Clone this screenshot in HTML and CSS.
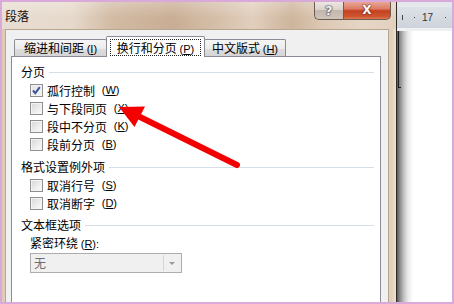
FILE: index.html
```html
<!DOCTYPE html>
<html lang="zh-CN">
<head>
    <meta charset="UTF-8">
    <meta name="viewport" content="width=device-width, initial-scale=1.0">
    <title>段落</title>
    <link rel="stylesheet" href="styles.css">
</head>
<body>

    <div class="screen">
        <div class="window">
            <div class="titlebar">
                <span class="title">段落</span>
                <div class="caption-buttons">
                    <div class="cap-btn help">?</div>
                    <div class="cap-btn close">X</div>
                </div>
            </div>

            <div class="dialog">
                <div class="tabs">
                    <div class="tab tab-indent">缩进和间距 <span class="key">(<u>I</u>)</span></div>
                    <div class="tab tab-break selected"><span class="focus">换行和分页 <span class="key">(<u>P</u>)</span></span></div>
                    <div class="tab tab-asian">中文版式 <span class="key">(<u>H</u>)</span></div>
                </div>

                <div class="panel">
                    <div class="group-title">分页</div>
                    <div class="check-row"><span class="checkbox checked"><svg width="11" height="11" viewBox="0 0 11 11"><path d="M2 5.5 L4.3 8.2 L8.8 2.2" fill="none" stroke="#3d55a0" stroke-width="2"/></svg></span>孤行控制 <span class="key">(<u>W</u>)</span></div>
                    <div class="check-row"><span class="checkbox"></span>与下段同页 <span class="key">(<u>X</u>)</span></div>
                    <div class="check-row"><span class="checkbox"></span>段中不分页 <span class="key">(<u>K</u>)</span></div>
                    <div class="check-row"><span class="checkbox"></span>段前分页 <span class="key">(<u>B</u>)</span></div>

                    <div class="group-title second">格式设置例外项</div>
                    <div class="check-row"><span class="checkbox"></span>取消行号 <span class="key">(<u>S</u>)</span></div>
                    <div class="check-row"><span class="checkbox"></span>取消断字 <span class="key">(<u>D</u>)</span></div>

                    <div class="group-title third">文本框选项</div>
                    <div class="field-label">紧密环绕 <span class="key">(<u>R</u>):</span></div>
                    <div class="combo">
                        <span class="combo-value">无</span>
                        <span class="combo-button"><span class="combo-arrow"></span></span>
                    </div>
                </div>
            </div>
        </div>

        <div class="doc">
            <div class="ruler-top"></div>
            <div class="ruler">
                <span class="tick"></span>
                <span class="dot"></span>
                <span class="ruler-num">17</span>
                <span class="dot"></span>
            </div>
            <div class="ruler-bottom"></div>
            <div class="page">
                <div class="margin-mark"></div>
            </div>
        </div>

        <!-- red pointer drawn over the dialog -->
        <svg class="arrow" width="454" height="304" viewBox="0 0 454 304">
            <line x1="237" y1="165" x2="136" y2="115" stroke="#f50000" stroke-width="6" stroke-linecap="round"/>
            <polygon points="119,107 145,106.5 134.5,127" fill="#f50000"/>
        </svg>
    </div>

</body>
</html>
```

FILE: styles.css
```css
* {
    box-sizing: border-box;
}

body {
    margin: 0;
    font-family: "Noto Sans CJK SC", "Noto Sans", sans-serif;
    font-size: 12px;
    color: #000;
}

u {
    text-decoration: underline;
    text-underline-offset: 1px;
}

.key {
    font-family: "Liberation Sans", sans-serif;
    font-size: 11px;
}

.screen {
    position: relative;
    display: flex;
    width: 454px;
    height: 304px;
    border: 2px solid #d9aad9;
    background: #fff;
    overflow: hidden;
}

/* dialog window */
.window {
    display: flex;
    flex-direction: column;
    width: 399px;
    background: linear-gradient(90deg, #dcc8b3 0, #e2d0bd 4px, #e2d0bd 390px, #eddccb 393px, #f3e6d8 396px, #dcc3a9 399px);
    border-right: 1px solid #2c2a28;
}

.titlebar {
    display: flex;
    align-items: flex-start;
    height: 27px;
    padding: 0 5px 0 3px;
    background:
        linear-gradient(180deg, rgba(255, 255, 255, 0.25), rgba(255, 255, 255, 0) 60%),
        linear-gradient(90deg, #e8ddd2 0, #e6d9cb 70px, #d2baa3 110px, #c9ad94 170px, #d8c3ae 225px, #e1cfbd 250px, #ceb49b 290px, #dcc8b4 320px, #e6d6c6 360px, #e3d0bd 399px);
}

.title {
    margin-top: 6px;
    line-height: 16px;
    color: #111;
}

.caption-buttons {
    display: flex;
    margin-left: auto;
}

.cap-btn {
    height: 18px;
    line-height: 17px;
    text-align: center;
    font-family: "DejaVu Sans", sans-serif;
    font-weight: bold;
    color: #fff;
    border: 1px solid #6c5d52;
    border-top: none;
}

.help {
    width: 29px;
    font-size: 13px;
    border-right: none;
    border-bottom-left-radius: 5px;
    background: linear-gradient(180deg, #ece6e1 0, #dcd2ca 45%, #c4b8ae 50%, #cfc4ba 100%);
    color: #f4f4f4;
    text-shadow: 0 0 1px #333, 0 0 1px #333, 0 0 2px #444;
}

.close {
    width: 48px;
    font-size: 12px;
    border-bottom-right-radius: 5px;
    background: linear-gradient(180deg, #e9a797 0, #dc7c66 40%, #c4401f 52%, #cf5530 85%, #e07a4e 100%);
    text-shadow: 0 0 1px #5a1a0a, 0 0 2px #5a1a0a;
}

.dialog {
    display: flex;
    flex-direction: column;
    flex: 1;
    margin: 0 7px 0 3px;
    padding: 6px 7px 0 5px;
    background: #f0f0f0;
    border: 1px solid #b9a690;
    border-bottom: none;
}

/* tab strip */
.tabs {
    display: flex;
    align-items: flex-end;
    height: 21px;
    padding-left: 3px;
}

.tab {
    height: 18px;
    line-height: 16px;
    text-align: center;
    border: 1px solid #898c95;
    border-bottom: none;
    border-radius: 2px 2px 0 0;
    background: linear-gradient(180deg, #f6f6f6 0, #ececec 50%, #dedede 52%, #d3d3d3 100%);
}

.tab-indent {
    width: 93px;
}

.tab-break {
    width: 99px;
    margin-left: -1px;
}

.tab-asian {
    width: 82px;
    margin-left: -1px;
}

.tab.selected {
    position: relative;
    z-index: 1;
    height: 21px;
    background: #fff;
}

.focus {
    display: block;
    height: 17px;
    margin: 2px 3px 0 3px;
    line-height: 15px;
    border: 1px dotted #222;
}

.panel {
    flex: 1;
    margin-top: -1px;
    padding: 7px 6px 0 9px;
    background: #fff;
    border: 1px solid #898c95;
    border-bottom: none;
}

.group-title {
    display: flex;
    align-items: center;
    gap: 4px;
    height: 16px;
    margin-bottom: 1px;
    line-height: 16px;
}

.group-title::after {
    content: "";
    flex: 1;
    height: 1px;
    background: #d5dfe5;
}

.group-title.second {
    margin-top: 6px;
}

.group-title.third {
    margin-top: 5px;
}

.check-row {
    display: flex;
    align-items: center;
    gap: 4px;
    height: 18px;
    margin-left: 9px;
    white-space: pre;
}

.checkbox {
    display: flex;
    align-items: center;
    justify-content: center;
    width: 13px;
    height: 13px;
    border: 1px solid #8f8f8f;
    background: linear-gradient(135deg, #d6d6d6 0, #eeeeee 60%, #fbfbfb 100%);
    box-shadow: inset 0 0 0 1px #f4f4f4;
}

.checkbox.checked {
    background: linear-gradient(135deg, #e2e2e2 0, #f6f6f6 100%);
}

.field-label {
    height: 18px;
    margin-left: 9px;
    line-height: 18px;
}

.combo {
    display: flex;
    width: 152px;
    height: 20px;
    margin: 1px 0 0 9px;
    background: #f0f0f0;
    border: 1px solid #adadad;
}

.combo-value {
    flex: 1;
    padding-left: 3px;
    line-height: 18px;
    color: #6d6d6d;
}

.combo-button {
    display: flex;
    align-items: center;
    justify-content: center;
    width: 17px;
    margin: 1px;
    border-left: 1px solid #d4d4d4;
}

.combo-arrow {
    width: 0;
    height: 0;
    border-left: 3px solid transparent;
    border-right: 3px solid transparent;
    border-top: 3px solid #9a9a9a;
}

/* word document behind the dialog */
.doc {
    display: flex;
    flex-direction: column;
    flex: 1;
}

.ruler-top {
    height: 5px;
    background: #e4e8ed;
}

.ruler {
    display: flex;
    align-items: center;
    height: 21px;
    padding-left: 5px;
    background: linear-gradient(180deg, #dde2e8, #cdd3da);
    font-family: "Liberation Sans", sans-serif;
    font-size: 10px;
    color: #333;
}

.tick {
    width: 1px;
    height: 5px;
    background: #444;
}

.dot {
    width: 1px;
    height: 1px;
    margin: 0 6px 0 11px;
    background: #444;
}

.ruler-num {
    margin-left: 1px;
    margin-right: 6px;
}

.ruler-num + .dot {
    margin-left: 6px;
}

.ruler-bottom {
    height: 3px;
    background: #eef0f3;
}

.page {
    flex: 1;
    background: linear-gradient(90deg, #5a5a5a 0, #8c8c8c 3px, #c4c4c4 7px, #eaeaea 11px, #fff 16px);
}

.margin-mark {
    width: 3px;
    height: 57px;
    margin-left: 1px;
    border-left: 1px solid #1e1e1e;
    border-bottom: 1px solid #1e1e1e;
}

.arrow {
    position: absolute;
    top: -2px;
    left: -2px;
    pointer-events: none;
}
```
